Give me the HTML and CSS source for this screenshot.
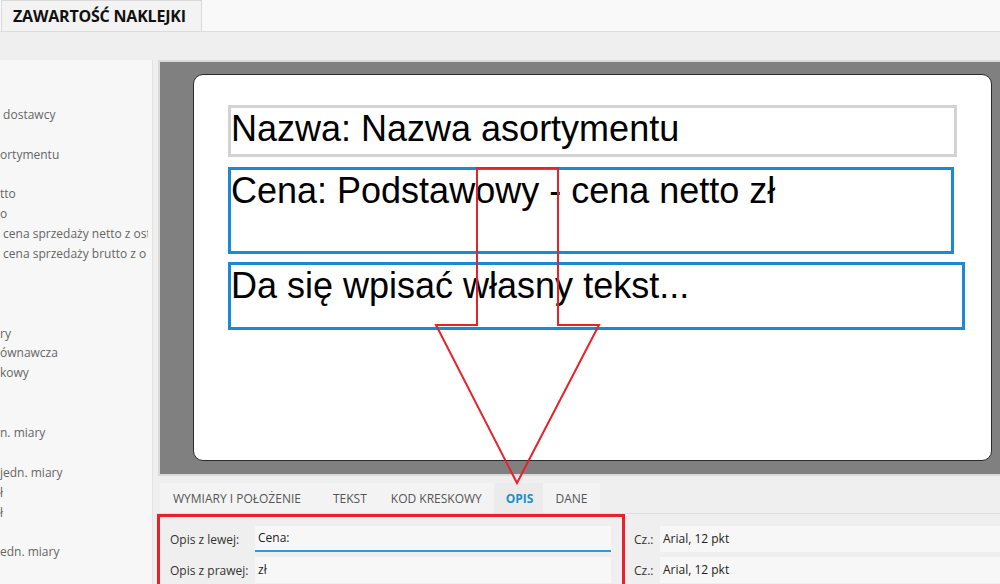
FILE: index.html
```html
<!DOCTYPE html>
<html lang="pl">
<head>
    <meta charset="UTF-8">
    <meta name="viewport" content="width=device-width, initial-scale=1.0">
    <title>Zawartość naklejki</title>
    <link rel="stylesheet" href="styles.css">
</head>
<body>
    <div id="app">
        <header class="topbar">
            <div class="doc-tab">ZAWARTOŚĆ NAKLEJKI</div>
        </header>

        <div class="workspace">
            <aside class="fields">
                <ul class="field-list">
                    <li></li>
                    <li></li>
                    <li>&nbsp;dostawcy</li>
                    <li></li>
                    <li>ortymentu</li>
                    <li></li>
                    <li>tto</li>
                    <li>o</li>
                    <li>&nbsp;cena sprzedaży netto z ost</li>
                    <li>&nbsp;cena sprzedaży brutto z o</li>
                    <li></li>
                    <li></li>
                    <li></li>
                    <li>ry</li>
                    <li>ównawcza</li>
                    <li>kowy</li>
                    <li></li>
                    <li></li>
                    <li>n. miary</li>
                    <li></li>
                    <li>jedn. miary</li>
                    <li>ł</li>
                    <li>ł</li>
                    <li></li>
                    <li>edn. miary</li>
                    <li></li>
                </ul>
            </aside>

            <main class="editor">
                <div class="canvas">
                    <div class="sticker">
                        <div class="element el-name">Nazwa: Nazwa asortymentu</div>
                        <div class="element el-price selected">Cena: Podstawowy - cena netto zł</div>
                        <div class="element el-text selected">Da się wpisać własny tekst...</div>
                    </div>
                </div>

                <div class="props">
                    <nav class="prop-tabs">
                        <span class="tab tab-first">WYMIARY I POŁOŻENIE</span>
                        <span class="tab">TEKST</span>
                        <span class="tab">KOD KRESKOWY</span>
                        <span class="tab active">OPIS</span>
                        <span class="tab">DANE</span>
                    </nav>
                    <div class="prop-body">
                        <div class="prop-col desc-col">
                            <div class="prop-row">
                                <label class="desc-label">Opis z lewej:</label>
                                <div class="input focused">Cena:</div>
                            </div>
                            <div class="prop-row">
                                <label class="desc-label">Opis z prawej:</label>
                                <div class="input">zł</div>
                            </div>
                        </div>
                        <div class="prop-col font-col">
                            <div class="prop-row">
                                <label class="font-label">Cz.:</label>
                                <div class="input">Arial, 12 pkt</div>
                            </div>
                            <div class="prop-row">
                                <label class="font-label">Cz.:</label>
                                <div class="input">Arial, 12 pkt</div>
                            </div>
                        </div>
                    </div>
                </div>
            </main>
        </div>

        <!-- red annotation drawn over the screenshot -->
        <svg class="arrow" width="1000" height="584" viewBox="0 0 1000 584">
            <polygon points="477,168 558,168 558,325 599,325 517,483 436,325 477,325" fill="none" stroke="#e8212b" stroke-width="2"/>
        </svg>
        <div class="highlight"></div>
    </div>
</body>
</html>
```

FILE: styles.css
```css
body{
    margin: 0;
    padding: 0;
    background-color: #efefef;
    font-family: "Open Sans", "Noto Sans", sans-serif;
    overflow: hidden;
}

#app{
    position: relative;
    width: 1000px;
    height: 584px;
    overflow: hidden;
}

/* top tab */
.topbar{
    height: 31px;
    background-color: #f9f9f9;
    border-bottom: 1px solid #dcdcdc;
    display: flex;
    align-items: flex-end;
    padding-left: 1px;
}

.doc-tab{
    height: 30px;
    width: 188px;
    padding-left: 11px;
    background-color: #f3f3f3;
    border: 1px solid #d9d9d9;
    border-bottom: none;
    font-size: 16px;
    font-weight: bold;
    letter-spacing: -0.2px;
    line-height: 30px;
    color: #111111;
}

.workspace{
    margin-top: 28px;
    height: 524px;
    display: flex;
}

/* field list on the left, scrolled sideways */
.fields{
    width: 152px;
    flex-shrink: 0;
    background-color: #f7f7f7;
    border-right: 1px solid #e3e3e3;
}

.field-list{
    list-style: none;
    width: 148px;
    margin: 0;
    padding: 5px 0 0 0;
    overflow: hidden;
}

.field-list li{
    height: 19.9px;
    line-height: 19.9px;
    font-size: 12px;
    color: #666666;
    white-space: nowrap;
}

.editor{
    flex: 1;
    margin-left: 5px;
    display: flex;
    flex-direction: column;
    min-width: 0;
}

/* label preview */
.canvas{
    height: 412px;
    flex-shrink: 0;
    border: 2px solid #dadada;
    border-right: none;
    background-color: #808080;
    overflow: hidden;
}

.sticker{
    position: relative;
    margin: 12px 0 0 33px;
    width: 797px;
    height: 385px;
    background-color: #ffffff;
    border: 1px solid #2b2b2b;
    border-radius: 10px;
}

.element{
    position: absolute;
    left: 34px;
    box-sizing: border-box;
    border: 3px solid #d3d3d3;
    font-family: "Liberation Sans", Arial, sans-serif;
    font-size: 36px;
    color: #000000;
    white-space: nowrap;
}

.element.selected{
    border-color: #1a8ad6;
}

.el-name{
    top: 30px;
    width: 729px;
    height: 52px;
}

.el-price{
    top: 92px;
    width: 726px;
    height: 87px;
}

.el-text{
    top: 187px;
    width: 737px;
    height: 68px;
}

/* properties */
.props{
    margin-top: 7px;
    flex: 1;
}

.prop-tabs{
    display: flex;
    width: 440px;
    height: 30px;
    margin-left: 2px;
    background-color: #f3f3f3;
}

.tab{
    padding: 2px 12px 0 12px;
    font-size: 12px;
    line-height: 28px;
    color: #555555;
}

.tab-first{
    padding-left: 13px;
    padding-right: 20px;
}

.tab.active{
    color: #1b8fcc;
    font-weight: bold;
    background-color: #ebebeb;
    padding-right: 10px;
}

.prop-body{
    border-top: 1px solid #dedede;
    display: flex;
    padding-top: 12px;
}

.prop-col{
    display: flex;
    flex-direction: column;
    gap: 5px;
}

.desc-col{
    width: 441px;
    padding-left: 12px;
}

.font-col{
    flex: 1;
    padding-left: 23px;
}

.prop-row{
    display: flex;
    align-items: center;
    height: 26px;
}

.desc-label{
    width: 85px;
    flex-shrink: 0;
    font-size: 12px;
    color: #333333;
}

.font-label{
    width: 26px;
    flex-shrink: 0;
    font-size: 12px;
    color: #333333;
}

.input{
    flex: 1;
    box-sizing: border-box;
    height: 26px;
    padding-left: 3px;
    background-color: #f7f7f7;
    font-size: 12px;
    line-height: 26px;
    color: #222222;
}

.input.focused{
    border-bottom: 2px solid #2a9ad8;
    line-height: 24px;
}

/* annotation overlay */
.arrow{
    position: absolute;
    left: 0;
    top: 0;
    pointer-events: none;
}

.highlight{
    position: absolute;
    left: 157px;
    top: 514px;
    width: 462px;
    height: 80px;
    border: 3px solid #e8212b;
    pointer-events: none;
}
```
